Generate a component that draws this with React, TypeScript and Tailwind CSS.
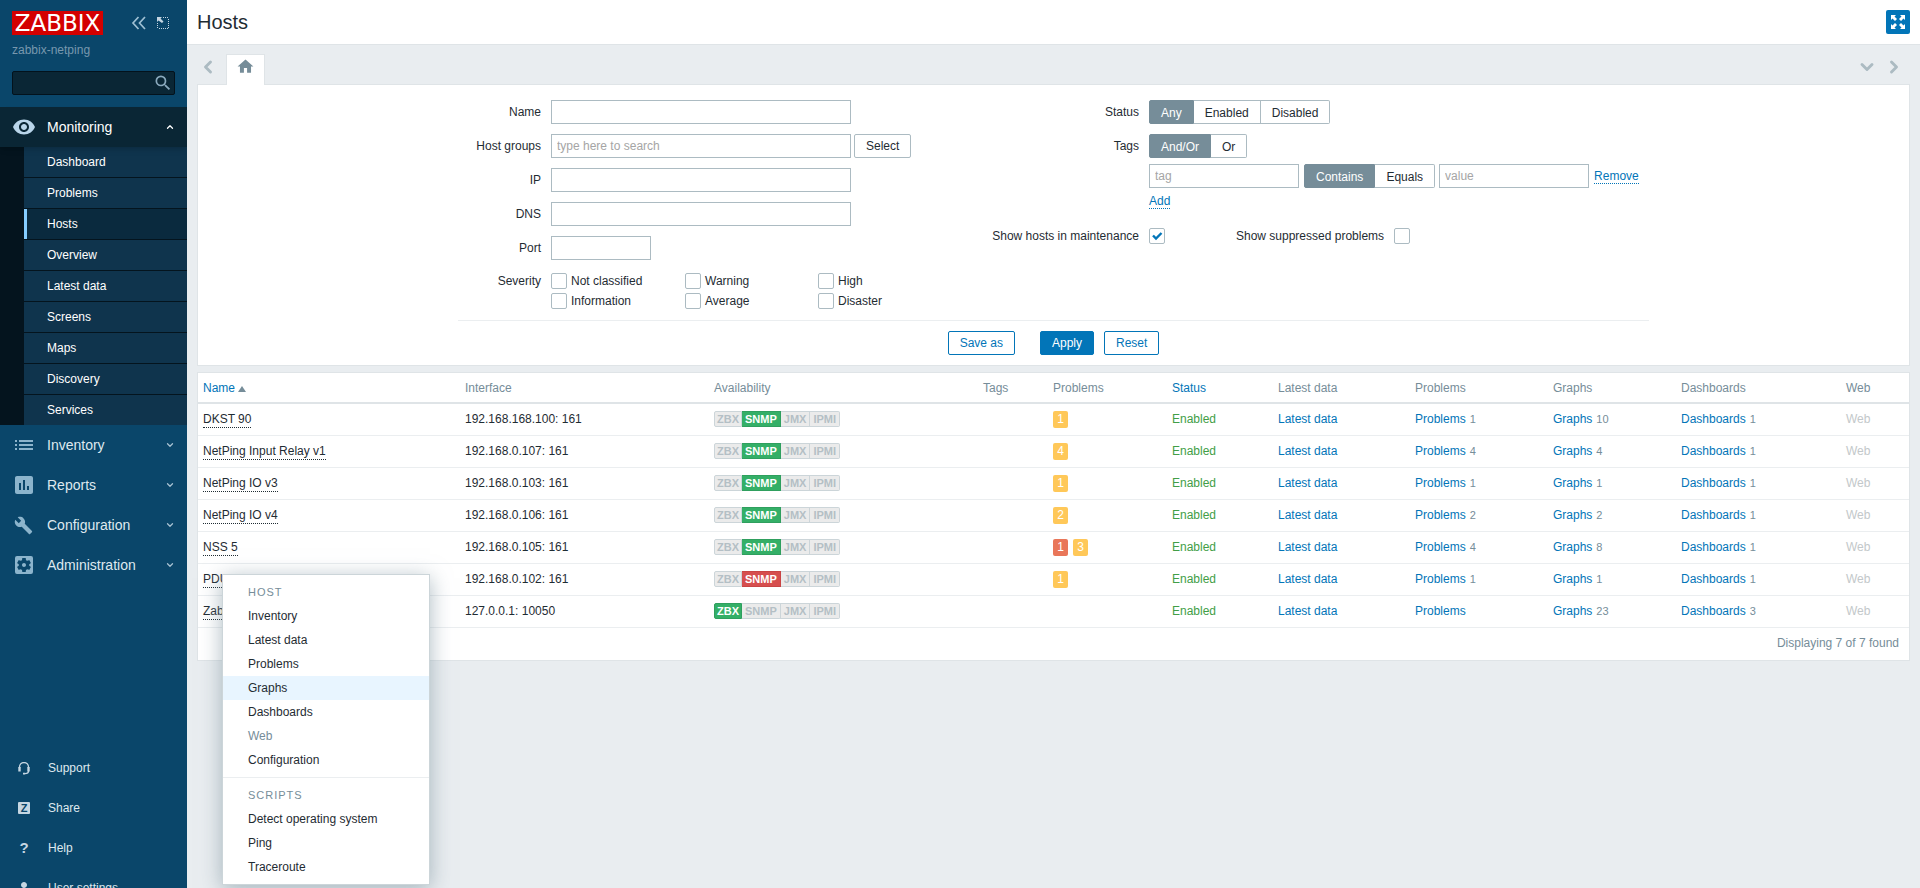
import React from 'react'
import {
    MdVisibility,
    MdInsertChart,
    MdBuild,
    MdSettingsApplications,
    MdHome,
    MdSearch,
    MdPerson,
} from 'react-icons/md'
import { ChevronDown, ChevronLeft, ChevronRight, ChevronUp } from 'lucide-react'
import clsx from 'clsx'

const monitoringItems = [
    'Dashboard',
    'Problems',
    'Hosts',
    'Overview',
    'Latest data',
    'Screens',
    'Maps',
    'Discovery',
    'Services',
]

const ListIcon = () => (
    <svg width="18" height="10" viewBox="0 0 18 10" fill="currentColor">
        <path d="M0 0h2v2H0zM4 0h14v2H4zM0 4h2v2H0zM4 4h14v2H4zM0 8h2v2H0zM4 8h14v2H4z" />
    </svg>
)

const HeadsetIcon = () => (
    <svg width="12" height="13" viewBox="0 0 12 13" fill="none" stroke="currentColor">
        <path d="M1.500 6V5a4.500 4.500 0 0 1 9 0v1M10.500 9c0 1.800-1.500 2.600-3.500 2.600" strokeWidth="1.3" />
        <path d="M1.500 5v4.500M10.500 5v4.500" strokeWidth="2.4" />
        <path d="M5 11.600h2" strokeWidth="1.800" />
    </svg>
)

const mainItems = [
    { label: 'Inventory', icon: <ListIcon /> },
    { label: 'Reports', icon: <MdInsertChart className="w-6 h-6" /> },
    { label: 'Configuration', icon: <MdBuild className="w-[19px] h-[19px]" /> },
    { label: 'Administration', icon: <MdSettingsApplications className="w-6 h-6" /> },
]

const footerItems = [
    { label: 'Support', icon: <HeadsetIcon /> },
    {
        label: 'Share',
        icon: (
            <span className="w-3 h-3 rounded-[1px] bg-[#c5d6e2] text-[#0a466a] text-[11px] leading-3 font-bold text-center">
                Z
            </span>
        ),
    },
    { label: 'Help', icon: <span className="text-[15px] leading-4 font-bold">?</span> },
    { label: 'User settings', icon: <MdPerson className="w-[18px] h-[18px]" /> },
]

type Host = {
    name: string
    iface: string
    active: 'ZBX' | 'SNMP'
    failed?: boolean
    severities: { count: number; high?: boolean }[]
    problems?: number
    graphs: number
    dashboards: number
}

const hosts: Host[] = [
    { name: 'DKST 90', iface: '192.168.168.100: 161', active: 'SNMP', severities: [{ count: 1 }], problems: 1, graphs: 10, dashboards: 1 },
    { name: 'NetPing Input Relay v1', iface: '192.168.0.107: 161', active: 'SNMP', severities: [{ count: 4 }], problems: 4, graphs: 4, dashboards: 1 },
    { name: 'NetPing IO v3', iface: '192.168.0.103: 161', active: 'SNMP', severities: [{ count: 1 }], problems: 1, graphs: 1, dashboards: 1 },
    { name: 'NetPing IO v4', iface: '192.168.0.106: 161', active: 'SNMP', severities: [{ count: 2 }], problems: 2, graphs: 2, dashboards: 1 },
    { name: 'NSS 5', iface: '192.168.0.105: 161', active: 'SNMP', severities: [{ count: 1, high: true }, { count: 3 }], problems: 4, graphs: 8, dashboards: 1 },
    { name: 'PDU', iface: '192.168.0.102: 161', active: 'SNMP', failed: true, severities: [{ count: 1 }], problems: 1, graphs: 1, dashboards: 1 },
    { name: 'Zabbix server', iface: '127.0.0.1: 10050', active: 'ZBX', severities: [], graphs: 23, dashboards: 3 },
]

const inputClass = 'h-6 border border-[#acbbc2] bg-white px-[5px] placeholder:text-[#a5a5a5] outline-none'

const Sidebar = () => (
    <aside className="w-[187px] h-screen shrink-0 overflow-hidden bg-[#0a466a] text-[#dfe9ef]">
        <div className="h-[107px] px-3 pt-[11px]">
            <div className="flex items-center">
                <a href="#" className="w-[91px] h-6 bg-[#d40000] text-white text-[23px] leading-6 text-center font-['DejaVu_Sans',sans-serif]">
                    ZABBIX
                </a>
                <button aria-label="Collapse sidebar" className="ml-7 text-[#9fc0d4]">
                    <svg width="16" height="14" viewBox="0 0 16 14" fill="none" stroke="currentColor" strokeWidth="1.7">
                        <path d="M7.500 1 2 7l5.500 6M14 1 8.500 7l5.500 6" />
                    </svg>
                </button>
                <button aria-label="Hide sidebar" className="ml-[10px] text-[#c5d6e2]">
                    <svg width="12" height="12" viewBox="0 0 12 12" fill="none" stroke="currentColor">
                        <path d="M6 .5h6M11.500 2v10M.5 6v6M2 11.500h9" strokeDasharray="1 1" />
                        <path d="M0 0h5L3.500 1.500 6.500 4.500 5 6 1.500 3.500 0 5z" fill="currentColor" stroke="none" />
                    </svg>
                </button>
            </div>
            <div className="mt-[7px] h-4 leading-4 text-[#7898ae]">zabbix-netping</div>
            <div className="mt-[13px] h-6 flex items-center rounded-xs border border-[#03121c] bg-[#0a2635]">
                <input type="text" aria-label="Search" className="flex-1 min-w-0 h-full px-1 outline-none" />
                <button aria-label="Search" className="pr-[1px] text-[#8aa9bd]">
                    <MdSearch className="w-5 h-5" />
                </button>
            </div>
        </div>

        <nav>
            <a href="#" className="relative h-10 flex items-center bg-[#0a2635] text-white text-sm shadow-md">
                <span className="w-[47px] flex justify-center text-[#b9d5ea]">
                    <MdVisibility className="w-6 h-6" />
                </span>
                <span className="flex-1">Monitoring</span>
                <ChevronUp className="w-[10px] h-[10px] mr-3" strokeWidth={3} />
            </a>
            <ul className="pl-6 bg-[#04141e]">
                {monitoringItems.map((item) => (
                    <li key={item} className="border-b border-[#04141e] last:border-b-0">
                        <a
                            href="#"
                            className={clsx(
                                'block h-[30px] leading-[30px] border-l-3 pl-5 text-white',
                                item === 'Hosts' ? 'border-[#85cdff] bg-[#0a2a3e]' : 'border-[#0f344d] bg-[#0f344d]'
                            )}
                        >
                            {item}
                        </a>
                    </li>
                ))}
            </ul>
            {mainItems.map((item) => (
                <a key={item.label} href="#" className="h-10 flex items-center text-sm">
                    <span className="w-[47px] flex justify-center text-[#8cb4cc]">{item.icon}</span>
                    <span className="flex-1">{item.label}</span>
                    <ChevronDown className="w-[10px] h-[10px] mr-3 text-[#a9c3d3]" strokeWidth={3} />
                </a>
            ))}
        </nav>

        <nav className="mt-[163px]">
            {footerItems.map((item) => (
                <a key={item.label} href="#" className="h-10 flex items-center">
                    <span className="w-12 flex justify-center text-[#c5d6e2]">{item.icon}</span>
                    {item.label}
                </a>
            ))}
        </nav>
    </aside>
)

const Segmented = ({ label, options }: { label: string; options: string[] }) => (
    <div role="group" aria-label={label} className="flex h-6">
        {options.map((option, i) => (
            <button
                key={option}
                className={clsx(
                    'px-[11px] border-y border-r first:border-l first:rounded-l-xs last:rounded-r-xs',
                    i === 0 ? 'bg-[#768d99] border-[#768d99] text-white' : 'bg-white border-[#acbbc2]'
                )}
            >
                {option}
            </button>
        ))}
    </div>
)

const Checkbox = ({ id, checked }: { id: string; checked?: boolean }) => (
    <span className="relative w-4 h-4 shrink-0">
        <input
            id={id}
            type="checkbox"
            defaultChecked={checked}
            className="peer block w-4 h-4 appearance-none rounded-xs border border-[#acbbc2] bg-white"
        />
        <svg
            viewBox="0 0 16 16"
            className="absolute inset-0 w-4 h-4 hidden peer-checked:block pointer-events-none"
            fill="none"
            stroke="#0275b8"
            strokeWidth="2.4"
        >
            <path d="M4 7.500 7 10.500 12.500 5" />
        </svg>
    </span>
)

const TextRow = ({ id, label, short }: { id: string; label: string; short?: boolean }) => (
    <div className="flex items-center gap-[10px]">
        <label htmlFor={id} className="w-[83px] text-right">{label}</label>
        <input id={id} type="text" className={clsx(inputClass, short ? 'w-[100px]' : 'w-[300px]')} />
    </div>
)

const dottedLink = 'text-[#0275b8] border-b border-dotted border-[#0275b8] leading-[14px]'

const Filter = () => (
    <form className="border border-[#dfe4e7] bg-white pt-[15px] pb-[10px]" onSubmit={(e) => e.preventDefault()}>
        <div className="max-w-[1191px] mx-auto">
            <div className="flex pb-[11px] border-b border-[#ebeef0]">
                <div className="flex-1 flex flex-col gap-[10px]">
                    <TextRow id="name" label="Name" />
                    <div className="flex items-center gap-[10px]">
                        <label htmlFor="groups" className="w-[83px] text-right">Host groups</label>
                        <div className="flex gap-[3px]">
                            <input id="groups" type="text" placeholder="type here to search" className={clsx(inputClass, 'w-[300px]')} />
                            <button className="h-6 px-[11px] border border-[#acbbc2] rounded-xs">Select</button>
                        </div>
                    </div>
                    <TextRow id="ip" label="IP" />
                    <TextRow id="dns" label="DNS" />
                    <TextRow id="port" label="Port" short />
                    <fieldset className="flex gap-[10px] pt-[3px]">
                        <legend className="float-left w-[83px] h-4 leading-[17px] text-right">Severity</legend>
                        <div className="grid grid-cols-[134px_133px_133px] gap-y-1">
                            {['Not classified', 'Warning', 'High', 'Information', 'Average', 'Disaster'].map((severity) => (
                                <div key={severity} className="flex items-center gap-1 h-4 leading-[17px]">
                                    <Checkbox id={severity} />
                                    <label htmlFor={severity}>{severity}</label>
                                </div>
                            ))}
                        </div>
                    </fieldset>
                </div>

                <div className="w-[660px] grid grid-cols-[150px_1fr] gap-x-[10px] auto-rows-min leading-6">
                    <span className="text-right">Status</span>
                    <Segmented label="Status" options={['Any', 'Enabled', 'Disabled']} />
                    <span className="mt-[10px] text-right">Tags</span>
                    <div className="mt-[10px]">
                        <Segmented label="Tags" options={['And/Or', 'Or']} />
                        <div className="mt-[6px] flex items-center">
                            <input aria-label="Tag" type="text" placeholder="tag" className={clsx(inputClass, 'w-[150px] mr-[5px]')} />
                            <Segmented label="Operator" options={['Contains', 'Equals']} />
                            <input aria-label="Value" type="text" placeholder="value" className={clsx(inputClass, 'w-[150px] ml-1 mr-[5px]')} />
                            <button className={dottedLink}>Remove</button>
                        </div>
                        <div className="mt-[6px] flex">
                            <button className={dottedLink}>Add</button>
                        </div>
                    </div>
                    <label htmlFor="maintenance" className="mt-[19px] h-4 leading-[17px] text-right">Show hosts in maintenance</label>
                    <div className="mt-[19px] flex h-4 leading-[17px]">
                        <Checkbox id="maintenance" checked />
                        <label htmlFor="suppressed" className="ml-[71px] mr-[10px]">Show suppressed problems</label>
                        <Checkbox id="suppressed" />
                    </div>
                </div>
            </div>
            <div className="flex justify-center pt-[10px]">
                <button className="h-6 px-[11px] border border-[#0275b8] rounded-xs text-[#0275b8]">Save as</button>
                <button className="h-6 px-[11px] ml-[25px] border border-[#0275b8] rounded-xs bg-[#0275b8] text-white">Apply</button>
                <button className="h-6 px-[11px] ml-[10px] border border-[#0275b8] rounded-xs text-[#0275b8]">Reset</button>
            </div>
        </div>
    </form>
)

const Availability = ({ host }: { host: Host }) => (
    <div className="flex h-4 text-[11px] leading-[14px]">
        {['ZBX', 'SNMP', 'JMX', 'IPMI'].map((type) => (
            <span
                key={type}
                className={clsx(
                    'px-[3px] border border-l-0 first:px-[2px] first:border-l first:rounded-l-xs last:rounded-r-xs font-bold',
                    type !== host.active && 'bg-[#ebebeb] border-[#ccd5d9] text-[#b4bfc5]',
                    type === host.active && !host.failed && 'bg-[#34af67] border-[#2f9f5e] text-white',
                    type === host.active && host.failed && 'bg-[#d64e4e] border-[#c94444] text-white'
                )}
            >
                {type}
            </span>
        ))}
    </div>
)

const CountLink = ({ label, count }: { label: string; count?: number }) => (
    <>
        <a href="#" className="text-[#0275b8]">{label}</a>
        {count && <span className="ml-1 text-[11px] text-[#768d99]">{count}</span>}
    </>
)

const HostTable = () => (
    <div className="mt-[6px] border border-[#dfe4e7] bg-white">
        <table className="w-full table-fixed text-left">
            <colgroup>
                <col className="w-[262px]" />
                <col className="w-[249px]" />
                <col className="w-[269px]" />
                <col className="w-[70px]" />
                <col className="w-[119px]" />
                <col className="w-[106px]" />
                <col className="w-[137px]" />
                <col className="w-[138px]" />
                <col className="w-[128px]" />
                <col className="w-[165px]" />
                <col className="w-[68px]" />
            </colgroup>
            <thead>
                <tr className="h-[30px] border-b-2 border-[#dfe4e7] text-[#768d99] [&>th]:font-normal [&>th]:pl-[5px]">
                    <th>
                        <a href="#" className="inline-flex items-center gap-[3px] text-[#0275b8]">
                            Name
                            <svg width="8" height="6" viewBox="0 0 8 6" className="mt-[2px]"><path d="M4 0l4 6H0z" fill="#768d99" /></svg>
                        </a>
                    </th>
                    <th>Interface</th>
                    <th>Availability</th>
                    <th>Tags</th>
                    <th>Problems</th>
                    <th><a href="#" className="text-[#0275b8]">Status</a></th>
                    <th>Latest data</th>
                    <th>Problems</th>
                    <th>Graphs</th>
                    <th>Dashboards</th>
                    <th>Web</th>
                </tr>
            </thead>
            <tbody>
                {hosts.map((host) => (
                    <tr key={host.name} className="h-8 border-b border-[#ebeef0] [&>td]:pl-[5px]">
                        <td>
                            <a href="#" className="inline-block leading-[15px] border-b border-dotted border-[#1f2c33]">{host.name}</a>
                        </td>
                        <td>{host.iface}</td>
                        <td><Availability host={host} /></td>
                        <td></td>
                        <td>
                            <div className="flex gap-[5px]">
                                {host.severities.map((s) => (
                                    <span
                                        key={s.count}
                                        className={clsx(
                                            'w-[15px] h-[17px] rounded-xs text-white leading-[17px] text-center',
                                            s.high ? 'bg-[#e97659]' : 'bg-[#ffc859]'
                                        )}
                                    >
                                        {s.count}
                                    </span>
                                ))}
                            </div>
                        </td>
                        <td className="text-[#429e47]">Enabled</td>
                        <td><a href="#" className="text-[#0275b8]">Latest data</a></td>
                        <td><CountLink label="Problems" count={host.problems} /></td>
                        <td><CountLink label="Graphs" count={host.graphs} /></td>
                        <td><CountLink label="Dashboards" count={host.dashboards} /></td>
                        <td className="text-[#c3c8ca]">Web</td>
                    </tr>
                ))}
            </tbody>
        </table>
        <div className="h-8 leading-[31px] pr-[10px] text-right text-[#768d99]">Displaying 7 of 7 found</div>
    </div>
)

const menuItem = 'block w-full h-6 pl-[25px] text-left'
const menuTitle = 'h-6 leading-[25px] pl-[25px] text-[11px] tracking-[1px] text-[#768d99]'

const HostMenu = () => (
    <div className="absolute left-[222px] top-[574px] w-[208px] py-[5px] border border-[#ccd5d9] bg-white shadow-[0_4px_20px_rgba(118,141,153,0.6)]">
        <div className={menuTitle}>HOST</div>
        {['Inventory', 'Latest data', 'Problems', 'Graphs', 'Dashboards', 'Web', 'Configuration'].map((item) => (
            <button
                key={item}
                disabled={item === 'Web'}
                className={clsx(menuItem, item === 'Graphs' && 'bg-[#e8f5ff]', item === 'Web' && 'text-[#768d99]')}
            >
                {item}
            </button>
        ))}
        <hr className="my-[5px] border-[#ebeef0]" />
        <div className={menuTitle}>SCRIPTS</div>
        {['Detect operating system', 'Ping', 'Traceroute'].map((item) => (
            <button key={item} className={menuItem}>{item}</button>
        ))}
    </div>
)

const App = () => {
    return (
        <div className="relative h-screen overflow-hidden flex bg-[#e9edf0] text-xs text-[#1f2c33] font-['Liberation_Sans',Arial,sans-serif]">
            <Sidebar />

            <div className="flex-1 min-w-0">
                <header className="h-[45px] flex items-center justify-between px-[10px] border-b border-[#dfe4e7] bg-white">
                    <h1 className="text-xl">Hosts</h1>
                    <button aria-label="Kiosk mode" className="w-6 h-6 flex items-center justify-center rounded-xs bg-[#0275b8] text-white">
                        <svg width="14" height="14" viewBox="0 0 14 14" fill="currentColor">
                            <path d="M0 0h5L3.500 1.500 6 4 4 6 1.500 3.500 0 5zM14 0v5l-1.500-1.500L10 6 8 4l2.500-2.500L9 0zM0 14V9l1.500 1.500L4 8l2 2-2.500 2.500L5 14zM14 14H9l1.500-1.500L8 10l2-2 2.500 2.500L14 9z" />
                        </svg>
                    </button>
                </header>

                <main className="px-[10px]">
                    {/* Filter tabs */}
                    <div className="flex h-[39px] pt-[9px] text-[#acbbc2]">
                        <button aria-label="Previous tab" className="w-[29px] pr-[7px] pb-1 flex items-center justify-center">
                            <ChevronLeft className="w-5 h-5" strokeWidth={3.5} />
                        </button>
                        <button aria-label="Home" className="relative z-10 w-[39px] -mb-px border border-b-0 border-[#dfe4e7] bg-white text-[#768d99] flex justify-center pt-[2px]">
                            <MdHome className="w-[19px] h-[19px]" />
                        </button>
                        <button aria-label="List of tabs" className="ml-auto pb-1">
                            <ChevronDown className="w-5 h-5" strokeWidth={3.5} />
                        </button>
                        <button aria-label="Next tab" className="ml-[7px] mr-[6px] pb-1">
                            <ChevronRight className="w-5 h-5" strokeWidth={3.5} />
                        </button>
                    </div>
                    <Filter />
                    <HostTable />
                </main>
            </div>

            <HostMenu />
        </div>
    )
}

export default App
